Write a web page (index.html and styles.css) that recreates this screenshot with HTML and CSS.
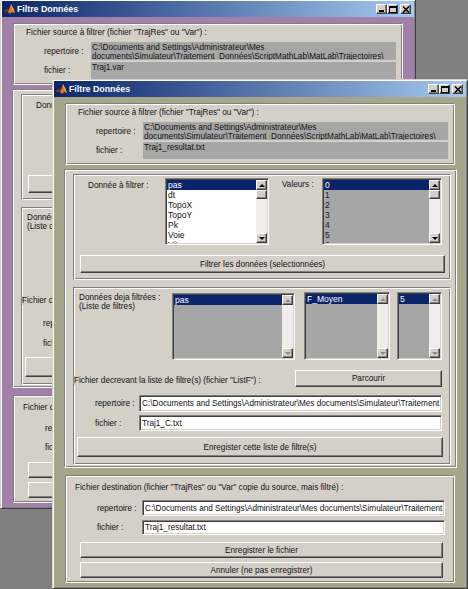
FILE: index.html
```html
<!DOCTYPE html>
<html lang="fr">
<head>
<meta charset="utf-8">
<title>Filtre Données</title>
<link rel="stylesheet" href="styles.css">
</head>
<body>
<div class="desk">

  <div class="win back">
    <div class="titlebar">
      <svg class="ticon" viewBox="0 0 11 12"><path d="M0 8 L3 6 L5 7 L7 1 L9 5 L11 10 L8 9 L6 11 L4 9 Z" fill="#e2731f"/><path d="M0 8 L3 6 L5 7 L4 9 Z" fill="#6b2f10"/><path d="M7 1 L9 5 L11 10 L8 6 Z" fill="#f7c14a"/></svg>
      <span class="ttext">Filtre Données</span>
      <div class="tbtns">
        <span class="tb"><svg width="7" height="6" viewBox="0 0 7 6"><rect x="1" y="4" width="5" height="2" fill="#000"/></svg></span>
        <span class="tb"><svg width="8" height="7" viewBox="0 0 8 7"><rect x="0" y="0" width="8" height="2" fill="#000"/><rect x="0.5" y="0.5" width="7" height="6" fill="none" stroke="#000"/></svg></span>
        <span class="tb close"><svg width="8" height="7" viewBox="0 0 8 7"><path d="M1 0.5 L7 6.5 M7 0.5 L1 6.5" stroke="#000" stroke-width="1.5"/></svg></span>
      </div>
    </div>
    <div class="client">
      <div class="panel p-src">
        <div class="ptitle">Fichier source à filtrer (fichier "TrajRes" ou "Var") :</div>
        <div class="frow r1"><span class="lbl">repertoire :</span><div class="gbox">C:\Documents and Settings\Administrateur\Mes<br>documents\Simulateur\Traitement&nbsp; Données\ScriptMathLab\MatLab\Trajectoires\</div></div>
        <div class="frow r2"><span class="lbl">fichier :</span><div class="gbox">Traj1.var</div></div>
      </div>
      <div class="panel p-mid">
        <div class="panel p-a">
          <div class="toprow">
            <span class="lbl1">Donnée à filtrer :</span>
            <div class="lb white lb1">
              <div class="items"><div class="sel">pas</div><div>dt</div><div>TopoX</div><div>TopoY</div><div>Pk</div><div>Voie</div><div>Vit</div></div>
              <div class="sb"><span class="sbtn up"></span><span class="thumb"></span><span class="fill"></span><span class="sbtn dn"></span></div>
            </div>
            <span class="lbl2">Valeurs :</span>
            <div class="lb grey lb2">
              <div class="items"><div class="sel">0</div><div>1</div><div>2</div><div>3</div><div>4</div><div>5</div><div>6</div></div>
              <div class="sb"><span class="sbtn up"></span><span class="thumb"></span><span class="fill"></span><span class="sbtn dn"></span></div>
            </div>
          </div>
          <div class="btn filt">Filtrer les données (selectionnées)</div>
        </div>
        <div class="panel p-b">
          <div class="toprow">
            <span class="lbl3">Données deja filtrées :<br>(Liste de filtres)</span>
            <div class="lb grey lb3">
              <div class="items"><div class="sel">pas</div></div>
              <div class="sb off"><span class="sbtn up"></span><span class="fill"></span><span class="sbtn dn"></span></div>
            </div>
            <div class="lb grey lb4">
              <div class="items"><div class="sel">F_Moyen</div></div>
              <div class="sb off"><span class="sbtn up"></span><span class="fill"></span><span class="sbtn dn"></span></div>
            </div>
            <div class="lb grey lb5">
              <div class="items"><div class="sel">5</div></div>
              <div class="sb off"><span class="sbtn up"></span><span class="fill"></span><span class="sbtn dn"></span></div>
            </div>
          </div>
          <div class="mrow"><span class="ftext">Fichier decrevant la liste de filtre(s) (fichier "ListF") :</span><div class="btn parc">Parcourir</div></div>
          <div class="frow r1"><span class="lbl">repertoire :</span><div class="edit">C:\Documents and Settings\Administrateur\Mes documents\Simulateur\Traitement Données</div></div>
          <div class="frow r2"><span class="lbl">fichier :</span><div class="edit">Traj1_C.txt</div></div>
          <div class="btn save">Enregister cette liste de filtre(s)</div>
        </div>
      </div>
      <div class="panel p-dst">
        <div class="ptitle">Fichier destination (fichier "TrajRes" ou "Var" copie du source, mais filtré) :</div>
        <div class="frow r1"><span class="lbl">repertoire :</span><div class="edit">C:\Documents and Settings\Administrateur\Mes documents\Simulateur\Traitement Données</div></div>
        <div class="frow r2"><span class="lbl">fichier :</span><div class="edit">Traj1_resultat.txt</div></div>
        <div class="btn b1">Enregistrer le fichier</div>
        <div class="btn b2">Annuler (ne pas enregistrer)</div>
      </div>
    </div>
  </div>

  <div class="win front">
    <div class="titlebar">
      <svg class="ticon" viewBox="0 0 11 12"><path d="M0 8 L3 6 L5 7 L7 1 L9 5 L11 10 L8 9 L6 11 L4 9 Z" fill="#e2731f"/><path d="M0 8 L3 6 L5 7 L4 9 Z" fill="#6b2f10"/><path d="M7 1 L9 5 L11 10 L8 6 Z" fill="#f7c14a"/></svg>
      <span class="ttext">Filtre Données</span>
      <div class="tbtns">
        <span class="tb"><svg width="7" height="6" viewBox="0 0 7 6"><rect x="1" y="4" width="5" height="2" fill="#000"/></svg></span>
        <span class="tb"><svg width="8" height="7" viewBox="0 0 8 7"><rect x="0" y="0" width="8" height="2" fill="#000"/><rect x="0.5" y="0.5" width="7" height="6" fill="none" stroke="#000"/></svg></span>
        <span class="tb close"><svg width="8" height="7" viewBox="0 0 8 7"><path d="M1 0.5 L7 6.5 M7 0.5 L1 6.5" stroke="#000" stroke-width="1.5"/></svg></span>
      </div>
    </div>
    <div class="client">
      <div class="panel p-src">
        <div class="ptitle">Fichier source à filtrer (fichier "TrajRes" ou "Var") :</div>
        <div class="frow r1"><span class="lbl">repertoire :</span><div class="gbox">C:\Documents and Settings\Administrateur\Mes<br>documents\Simulateur\Traitement&nbsp; Données\ScriptMathLab\MatLab\Trajectoires\</div></div>
        <div class="frow r2"><span class="lbl">fichier :</span><div class="gbox">Traj1_resultat.txt</div></div>
      </div>
      <div class="panel p-mid">
        <div class="panel p-a">
          <div class="toprow">
            <span class="lbl1">Donnée à filtrer :</span>
            <div class="lb white lb1">
              <div class="items"><div class="sel">pas</div><div>dt</div><div>TopoX</div><div>TopoY</div><div>Pk</div><div>Voie</div><div>Vit</div></div>
              <div class="sb"><span class="sbtn up"></span><span class="thumb"></span><span class="fill"></span><span class="sbtn dn"></span></div>
            </div>
            <span class="lbl2">Valeurs :</span>
            <div class="lb grey lb2">
              <div class="items"><div class="sel">0</div><div>1</div><div>2</div><div>3</div><div>4</div><div>5</div><div>6</div></div>
              <div class="sb"><span class="sbtn up"></span><span class="thumb"></span><span class="fill"></span><span class="sbtn dn"></span></div>
            </div>
          </div>
          <div class="btn filt">Filtrer les données (selectionnées)</div>
        </div>
        <div class="panel p-b">
          <div class="toprow">
            <span class="lbl3">Données deja filtrées :<br>(Liste de filtres)</span>
            <div class="lb grey lb3">
              <div class="items"><div class="sel">pas</div></div>
              <div class="sb off"><span class="sbtn up"></span><span class="fill"></span><span class="sbtn dn"></span></div>
            </div>
            <div class="lb grey lb4">
              <div class="items"><div class="sel">F_Moyen</div></div>
              <div class="sb off"><span class="sbtn up"></span><span class="fill"></span><span class="sbtn dn"></span></div>
            </div>
            <div class="lb grey lb5">
              <div class="items"><div class="sel">5</div></div>
              <div class="sb off"><span class="sbtn up"></span><span class="fill"></span><span class="sbtn dn"></span></div>
            </div>
          </div>
          <div class="mrow"><span class="ftext">Fichier decrevant la liste de filtre(s) (fichier "ListF") :</span><div class="btn parc">Parcourir</div></div>
          <div class="frow r1"><span class="lbl">repertoire :</span><div class="edit">C:\Documents and Settings\Administrateur\Mes documents\Simulateur\Traitement Données</div></div>
          <div class="frow r2"><span class="lbl">fichier :</span><div class="edit">Traj1_C.txt</div></div>
          <div class="btn save">Enregister cette liste de filtre(s)</div>
        </div>
      </div>
      <div class="panel p-dst">
        <div class="ptitle">Fichier destination (fichier "TrajRes" ou "Var" copie du source, mais filtré) :</div>
        <div class="frow r1"><span class="lbl">repertoire :</span><div class="edit">C:\Documents and Settings\Administrateur\Mes documents\Simulateur\Traitement Données</div></div>
        <div class="frow r2"><span class="lbl">fichier :</span><div class="edit">Traj1_resultat.txt</div></div>
        <div class="btn b1">Enregistrer le fichier</div>
        <div class="btn b2">Annuler (ne pas enregistrer)</div>
      </div>
    </div>
  </div>

</div>
</body>
</html>
```

FILE: styles.css
```css
* { box-sizing: border-box; }
html, body { margin: 0; padding: 0; }
body {
  width: 468px; height: 589px; overflow: hidden;
  background: #808080;
  font-family: "Liberation Sans", Arial, sans-serif;
  font-size: 8.2px; color: #111;
}
.desk { position: relative; width: 468px; height: 589px; overflow: hidden; }

/* windows on the desktop */
.win {
  position: absolute; width: 416px; height: 510px;
  border: 1px solid; border-color: #d4d0c8 #404040 #404040 #d4d0c8;
  box-shadow: inset 1px 1px #fff, inset -1px -1px #808080;
  padding: 1px;
  display: flex; flex-direction: column;
}
.win.back { left: 0; top: -1px; background: #a380a9; }
.win.front { left: 52px; top: 79px; background: #a6a68b; }

.titlebar {
  height: 16px; flex: none;
  display: flex; align-items: center;
  background: linear-gradient(to right, #0a246a, #a6caf0);
  padding: 0 3px 0 2px;
}
.ticon { width: 11px; height: 12px; flex: none; }
.ttext { margin-left: 2px; color: #fff; font-weight: bold; font-size: 8.8px; white-space: nowrap; }
.tbtns { margin-left: auto; display: flex; align-items: center; }
.tb {
  width: 11px; height: 10px;
  background: #d4d0c8;
  border: 1px solid; border-color: #fff #404040 #404040 #fff;
  box-shadow: inset -1px -1px #808080;
  display: flex; align-items: center; justify-content: center;
}
.tb svg { display: block; }
.tb.close { margin-left: 2px; }

.client {
  flex: 1; display: flex; flex-direction: column; align-items: flex-start;
  padding-top: 6px;
}

/* panels (etched frames) */
.panel {
  flex: none;
  background: #d4d0c8;
  border: 1px solid; border-color: #808080 #fff #fff #808080;
  box-shadow: inset 1px 1px #fff, inset -1px -1px #808080;
}
.p-src { width: 390px; height: 62px; margin-left: 11px; padding-top: 4px; }
.p-mid { width: 393px; height: 299px; margin: 4px 0 0 10px; display: flex; flex-direction: column; }
.p-a { width: 378px; height: 106px; margin: 4px 0 0 8px; }
.p-b { width: 378px; height: 178px; margin: 7px 0 0 8px; }
.p-dst { width: 390px; height: 108px; margin: 7px 0 0 11px; padding-top: 7px; }

.ptitle { white-space: nowrap; }
.frow { display: flex; align-items: center; }
.lbl { flex: none; white-space: nowrap; }

/* source panel */
.p-src .ptitle { margin-left: 12px; line-height: 9px; }
.p-src .r1 { margin-top: 5px; padding-left: 30px; height: 18px; }
.p-src .r2 { margin-top: 2px; padding-left: 30px; height: 17px; }
.p-src .lbl { width: 47px; }
.gbox {
  width: 305px; height: 100%;
  background: #a6a6a6;
  padding: 1px 1px;
  line-height: 9px; white-space: nowrap; overflow: hidden;
  align-self: stretch;
}

/* common controls */
.edit {
  background: #fff;
  border: 1px solid; border-color: #808080 #fff #fff #808080;
  box-shadow: inset 1px 1px #404040, inset -1px -1px #d4d0c8;
  padding: 0 2px;
  display: flex; align-items: center;
  white-space: nowrap; overflow: hidden;
  width: 303px; height: 100%;
}
.btn {
  flex: none;
  background: #d4d0c8;
  border: 1px solid; border-color: #fff #404040 #404040 #fff;
  box-shadow: inset -1px -1px #808080;
  display: flex; align-items: center; justify-content: center;
  white-space: nowrap;
}

/* listboxes */
.lb {
  flex: none; display: flex; overflow: hidden;
  border: 1px solid; border-color: #808080 #fff #fff #808080;
  box-shadow: inset 1px 1px #404040, inset -1px -1px #d4d0c8;
  padding: 1px;
}
.lb.white { background: #fff; }
.lb.grey { background: #a6a6a6; color: #1a1a1a; }
.items { flex: 1; min-width: 0; overflow: hidden; font-size: 8.5px; line-height: 10px; }
.items div { padding-left: 1px; white-space: nowrap; }
.items .sel { background: #0a246a; color: #fff; }
.sb { width: 11px; flex: none; display: flex; flex-direction: column; background: #efeeea; }
.sbtn, .thumb {
  flex: none; height: 10px;
  background: #d4d0c8;
  border: 1px solid; border-color: #fff #404040 #404040 #fff;
  box-shadow: inset -1px -1px #808080;
  display: flex; align-items: center; justify-content: center;
}
.thumb { height: 9px; }
.sbtn::after { content: ""; border-left: 3px solid transparent; border-right: 3px solid transparent; }
.sbtn.up::after { border-bottom: 3px solid #000; }
.sbtn.dn::after { border-top: 3px solid #000; }
.sb.off .sbtn.up::after { border-bottom-color: #8c8c8c; }
.sb.off .sbtn.dn::after { border-top-color: #8c8c8c; }
.sb .fill { flex: 1; }

/* panel A */
.toprow { display: flex; align-items: flex-start; }
.p-a .toprow { padding-top: 3px; }
.lbl1 { flex: none; margin: 3px 0 0 14px; width: 77px; line-height: 10px; white-space: nowrap; }
.lb1 { width: 104px; height: 67px; }
.lbl2 { flex: none; margin: 2px 0 0 13px; width: 40px; line-height: 10px; white-space: nowrap; }
.lb2 { width: 120px; height: 67px; }
.filt { margin: 10px 0 0 6px; width: 365px; height: 18px; }

/* panel B */
.p-b .toprow { padding-top: 4px; }
.lbl3 { flex: none; margin: 1px 0 0 5px; width: 93px; line-height: 9px; white-space: nowrap; }
.lb3 { margin-top: 1px; width: 123px; height: 67px; }
.lb4 { margin-left: 9px; width: 86px; height: 68px; }
.lb5 { margin-left: 7px; width: 45px; height: 68px; }
.mrow { display: flex; align-items: center; margin-top: 10px; height: 17px; }
.ftext { background: #d4d0c8; white-space: nowrap; margin-top: 3px; }
.parc { margin-left: auto; margin-right: 8px; width: 147px; height: 17px; }
.p-b .r1 { margin-top: 8px; padding-left: 21px; height: 17px; }
.p-b .r2 { margin-top: 3px; padding-left: 21px; height: 16px; }
.p-b .lbl { width: 44px; }
.save { margin: 6px 0 0 3px; width: 366px; height: 20px; }

/* destination panel */
.p-dst .ptitle { margin-left: 9px; line-height: 10px; }
.p-dst .r1 { margin-top: 7px; padding-left: 31px; height: 16px; }
.p-dst .r2 { margin-top: 4px; padding-left: 31px; height: 15px; }
.p-dst .lbl { width: 45px; }
.b1 { margin: 7px 0 0 14px; width: 363px; height: 16px; }
.b2 { margin: 4px 0 0 14px; width: 363px; height: 16px; }
```
